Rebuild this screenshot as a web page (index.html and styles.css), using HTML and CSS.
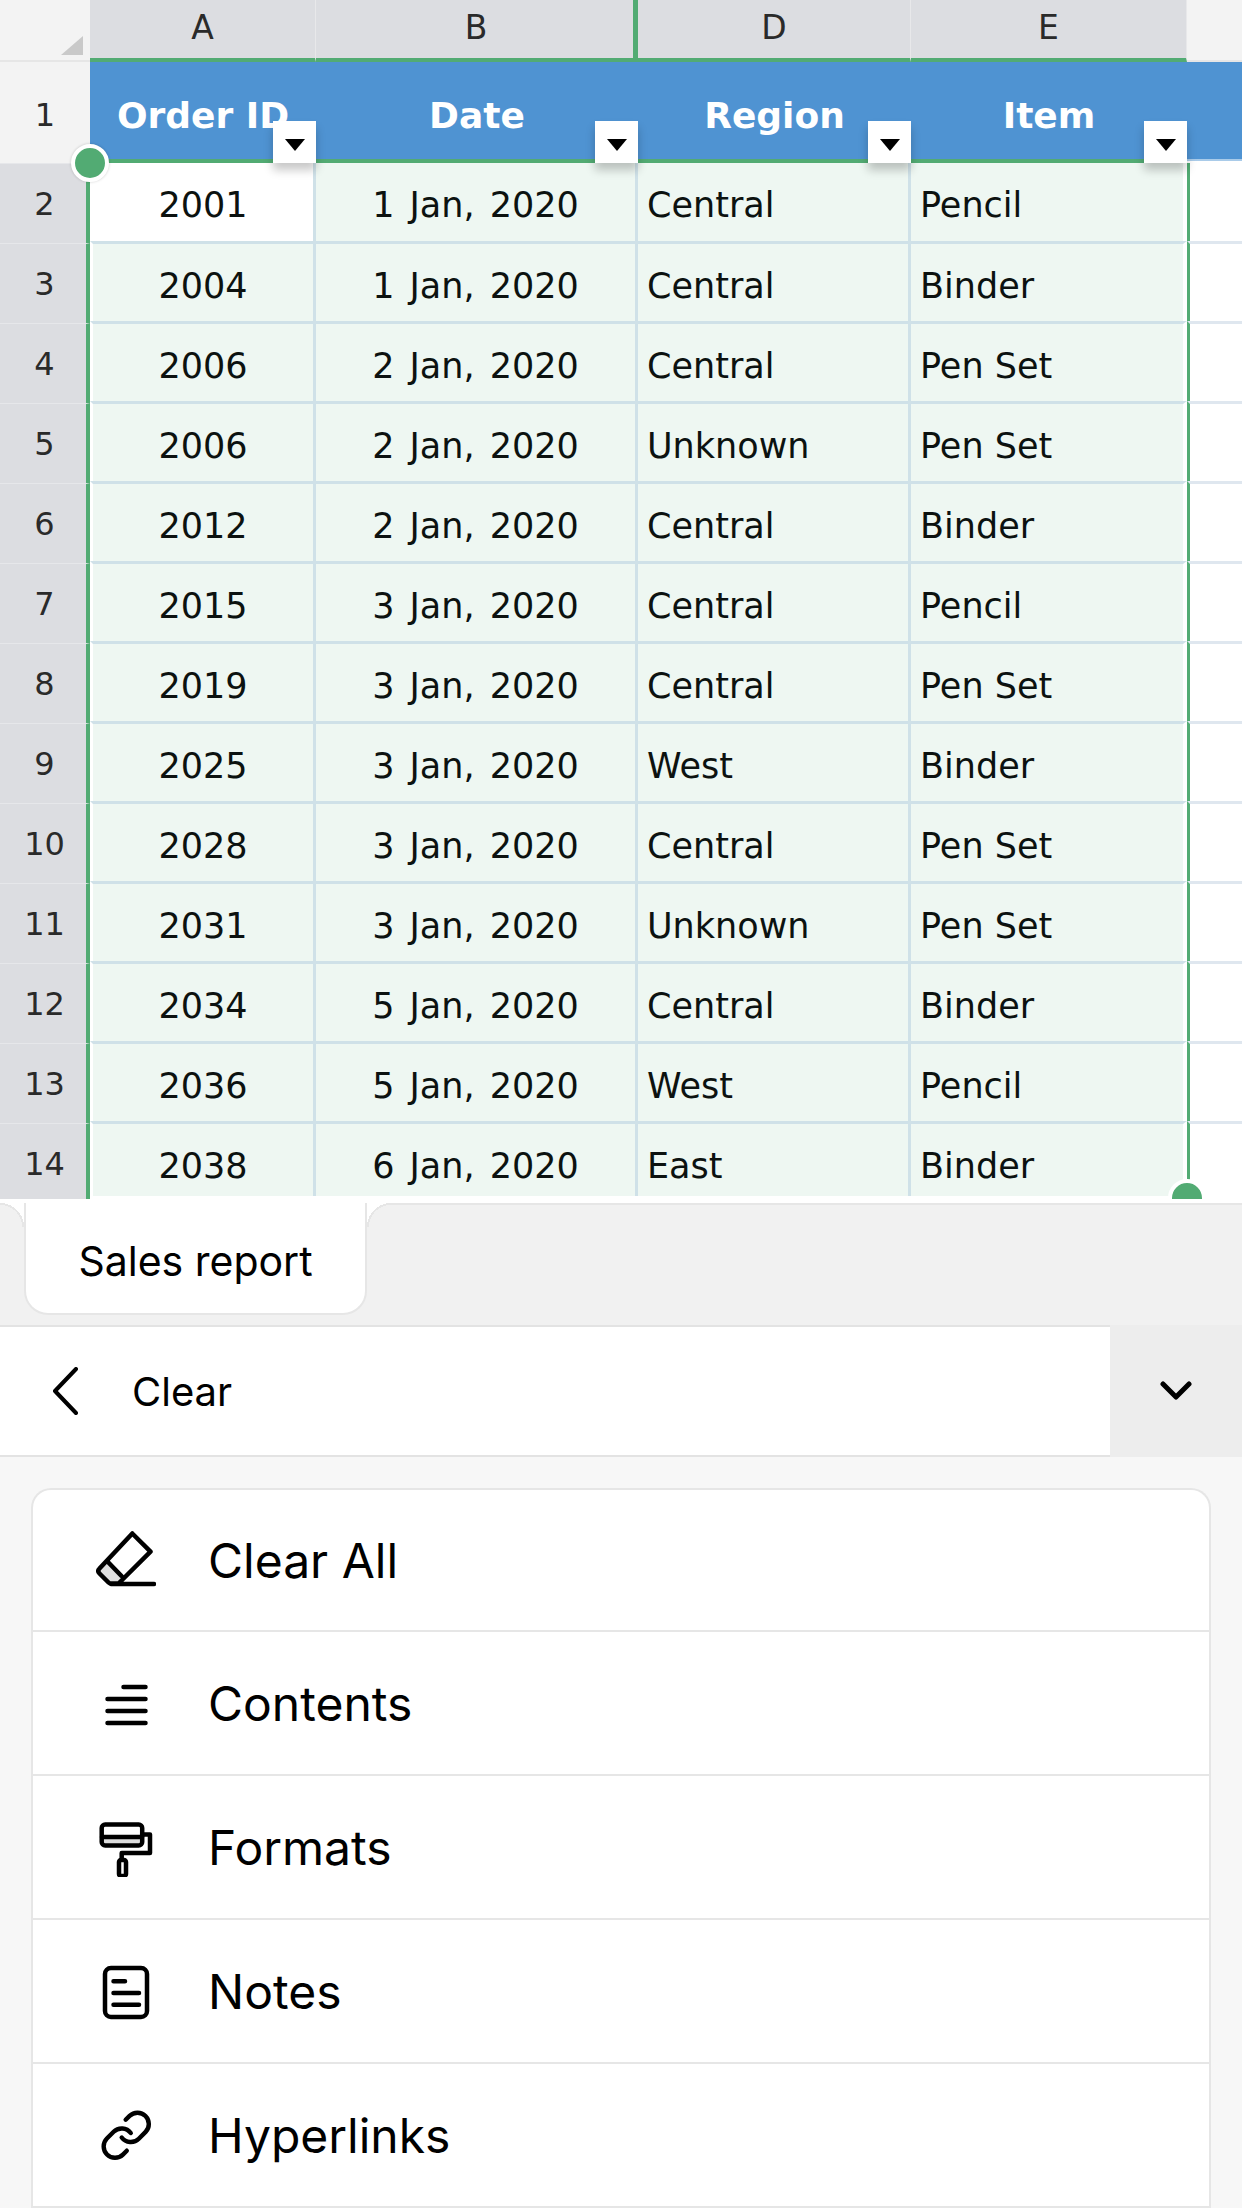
FILE: index.html
```html
<!DOCTYPE html>
<html lang="en">
<head>
<meta charset="utf-8">
<title>Sales report</title>
<link rel="stylesheet" href="styles.css">
</head>
<body>
<div class="app">
  <section class="sheet">
    <div class="row colhead">
      <div class="corner"><span class="corner-mark"></span></div>
      <div class="ch">A</div>
      <div class="ch ch-b">B</div>
      <div class="ch">D</div>
      <div class="ch">E</div>
      <div class="ch-rest"></div>
    </div>
    <div class="row titles">
      <div class="num num-top">1</div>
      <div class="th">Order ID<button class="filter"></button></div>
      <div class="th">Date<button class="filter"></button></div>
      <div class="th">Region<button class="filter"></button></div>
      <div class="th">Item<button class="filter"></button></div>
      <div class="th-rest"></div>
    </div>
    <div class="row row-first"><div class="num">2</div><div class="td ctr first active">2001</div><div class="td ctr">1 Jan, 2020</div><div class="td">Central</div><div class="td last">Pencil</div><div class="rest"></div></div>
    <div class="row"><div class="num">3</div><div class="td ctr first">2004</div><div class="td ctr">1 Jan, 2020</div><div class="td">Central</div><div class="td last">Binder</div><div class="rest"></div></div>
    <div class="row"><div class="num">4</div><div class="td ctr first">2006</div><div class="td ctr">2 Jan, 2020</div><div class="td">Central</div><div class="td last">Pen Set</div><div class="rest"></div></div>
    <div class="row"><div class="num">5</div><div class="td ctr first">2006</div><div class="td ctr">2 Jan, 2020</div><div class="td">Unknown</div><div class="td last">Pen Set</div><div class="rest"></div></div>
    <div class="row"><div class="num">6</div><div class="td ctr first">2012</div><div class="td ctr">2 Jan, 2020</div><div class="td">Central</div><div class="td last">Binder</div><div class="rest"></div></div>
    <div class="row"><div class="num">7</div><div class="td ctr first">2015</div><div class="td ctr">3 Jan, 2020</div><div class="td">Central</div><div class="td last">Pencil</div><div class="rest"></div></div>
    <div class="row"><div class="num">8</div><div class="td ctr first">2019</div><div class="td ctr">3 Jan, 2020</div><div class="td">Central</div><div class="td last">Pen Set</div><div class="rest"></div></div>
    <div class="row"><div class="num">9</div><div class="td ctr first">2025</div><div class="td ctr">3 Jan, 2020</div><div class="td">West</div><div class="td last">Binder</div><div class="rest"></div></div>
    <div class="row"><div class="num">10</div><div class="td ctr first">2028</div><div class="td ctr">3 Jan, 2020</div><div class="td">Central</div><div class="td last">Pen Set</div><div class="rest"></div></div>
    <div class="row"><div class="num">11</div><div class="td ctr first">2031</div><div class="td ctr">3 Jan, 2020</div><div class="td">Unknown</div><div class="td last">Pen Set</div><div class="rest"></div></div>
    <div class="row"><div class="num">12</div><div class="td ctr first">2034</div><div class="td ctr">5 Jan, 2020</div><div class="td">Central</div><div class="td last">Binder</div><div class="rest"></div></div>
    <div class="row"><div class="num">13</div><div class="td ctr first">2036</div><div class="td ctr">5 Jan, 2020</div><div class="td">West</div><div class="td last">Pencil</div><div class="rest"></div></div>
    <div class="row row-end"><div class="num">14</div><div class="td ctr first">2038</div><div class="td ctr">6 Jan, 2020</div><div class="td">East</div><div class="td last">Binder</div><div class="rest"></div></div>
    <span class="handle handle-start"></span>
    <span class="handle handle-end"></span>
  </section>

  <nav class="tabs">
    <div class="tab">Sales report</div>
  </nav>

  <header class="bar">
    <div class="bar-main">
      <svg class="back" viewBox="0 0 26 48" aria-hidden="true"><path d="M24 2 3 24l21 22"/></svg>
      <span class="bar-title">Clear</span>
    </div>
    <div class="bar-toggle">
      <svg class="down" viewBox="0 0 32 20" aria-hidden="true"><path d="M3 3l13 13L29 3"/></svg>
    </div>
  </header>

  <main class="panel">
    <ul class="menu">
      <li class="item">
        <svg class="ico" viewBox="0 0 60 60" aria-hidden="true">
          <path class="tint" d="M11 31 25.500 46 22 53.500H15L3.500 42z"/>
          <path d="M36.300 3.500 54.500 21.700 22.500 53.500H15Q13.500 53.500 12.500 52.500L3.500 43.500Q1 41 3.500 38.500ZM11 31 25.500 46M15 54H58"/>
        </svg>
        <span>Clear All</span>
      </li>
      <li class="item">
        <svg class="ico" viewBox="0 0 60 60" aria-hidden="true">
          <path d="M27.500 14H49.500M11.500 26H49.500M11.500 38H49.500M11.500 50H49.500"/>
        </svg>
        <span>Contents</span>
      </li>
      <li class="item">
        <svg class="ico" viewBox="0 0 60 60" aria-hidden="true">
          <rect class="tint" x="6" y="20" width="40" height="7" stroke="none"/>
          <rect x="5.700" y="7.500" width="40.500" height="21" rx="3.500"/>
          <path d="M6 20H46M47 17.500H54V36H25.700V42"/>
          <rect x="23" y="43" width="7" height="16" rx="2"/>
        </svg>
        <span>Formats</span>
      </li>
      <li class="item">
        <svg class="ico" viewBox="0 0 60 60" aria-hidden="true">
          <rect x="9" y="7" width="42" height="49" rx="6"/>
          <path d="M17.500 20.300H29M17.500 32H43M17.500 43.700H43"/>
        </svg>
        <span>Notes</span>
      </li>
      <li class="item">
        <svg class="ico" viewBox="0 0 60 60" aria-hidden="true">
          <g transform="translate(3 3) scale(2.27)">
            <path class="thin" d="M10 13a5 5 0 0 0 7.540.540l3-3a5 5 0 0 0-7.070-7.070l-1.720 1.710"/>
            <path class="thin" d="M14 11a5 5 0 0 0-7.540-.540l-3 3a5 5 0 0 0 7.070 7.070l1.710-1.710"/>
          </g>
        </svg>
        <span>Hyperlinks</span>
      </li>
    </ul>
  </main>
</div>
</body>
</html>
```

FILE: styles.css
```css
* { box-sizing: border-box; }

html, body {
  margin: 0;
  padding: 0;
  background: #fff;
}

.app {
  width: 1242px;
  height: 2208px;
  overflow: hidden;
  display: flex;
  flex-direction: column;
  font-family: Inter, "Liberation Sans", Arial, sans-serif;
  color: #000;
}

/* sheet */
.sheet {
  position: relative;
  height: 1199px;
  flex: none;
  overflow: hidden;
  font-family: "DejaVu Sans", Verdana, sans-serif;
  font-size: 35px;
  color: #0c1210;
}

.row {
  display: grid;
  grid-template-columns: 90px 226px 322px 273px 276px 55px;
  grid-template-rows: 100%;
  height: 80px;
  line-height: 84px;
}

.colhead { height: 62px; line-height: 56px; }
.titles { height: 101px; line-height: 108px; position: relative; z-index: 2; }
.row-end { height: 76px; }
.row-end .td, .row-end .rest { margin-bottom: 3px; }
.row-first .td { border-top: 0; margin-top: 0; line-height: 85px; }
.row-first .rest { border-top: 0; margin-top: 0; }

.corner {
  position: relative;
  background: #f3f3f3;
  border-bottom: 2px solid #e6e6e6;
}

.corner-mark {
  position: absolute;
  left: 61px;
  top: 36px;
  width: 22px;
  height: 19px;
  background: #c9c9c9;
  clip-path: polygon(100% 0, 100% 100%, 0 100%);
}

.ch {
  background: #dcdde1;
  border-bottom: 4px solid #52ab73;
  border-right: 1px solid #e8e8ea;
  text-align: center;
  color: #2a2a2a;
  font-size: 33px;
}

.ch-b {
  border-right: 5px solid #52ab73;
  padding-left: 3px;
}

.ch-rest {
  background: #f3f3f3;
  border-bottom: 2px solid #e6e6e6;
}

.num {
  background: #dcdde1;
  border-right: 4px solid #52ab73;
  border-top: 1px solid #e6e7ea;
  padding-left: 3px;
  text-align: center;
  color: #2a2a2a;
  font-size: 32px;
  line-height: 80px;
}

.num-top {
  background: #f3f3f3;
  border-right: 0;
  border-top: 0;
  padding-left: 0;
  line-height: 106px;
}

.th {
  position: relative;
  background: #4f93d2;
  border-bottom: 4px solid #52ab73;
  color: #fff;
  font-weight: 700;
  font-size: 36px;
  text-align: center;
  white-space: nowrap;
}

.th-rest {
  background: #4f93d2;
  height: 99px;
  border-bottom: 2px solid #a9cbe9;
}

.filter {
  position: absolute;
  right: 0;
  bottom: -4px;
  width: 43px;
  height: 42px;
  padding: 0;
  border: 0;
  background: #fff;
  box-shadow: 0 7px 9px rgba(0, 0, 0, .22);
  z-index: 3;
}

.filter::after {
  content: "";
  position: absolute;
  left: 12px;
  top: 18px;
  border-left: 10px solid transparent;
  border-right: 10px solid transparent;
  border-top: 12px solid #000;
}

.td {
  background: #eef7f2;
  border-right: 3px solid #cfe1e8;
  border-top: 3px solid #cfe1e8;
  margin-top: -2px;
  padding-left: 9px;
  white-space: nowrap;
}

.ctr { text-align: center; padding-left: 0; word-spacing: 4px; }
.first { border-left: 3px solid #fff; }
.active { background: #fff; }
.last { border-right: 4px solid #fff; }

.rest {
  background: #fff;
  border-left: 3px solid #52ab73;
  border-top: 3px solid #dfe7ef;
  margin-top: -2px;
}

.handle {
  position: absolute;
  width: 38px;
  height: 38px;
  border-radius: 50%;
  background: #52ab73;
  border: 4px solid #fff;
  box-shadow: 0 0 3px rgba(0, 0, 0, .2);
  z-index: 4;
}

.handle-start { left: 71px; top: 144px; }
.handle-end { left: 1168px; top: 1179px; box-shadow: none; }

/* tabs */
.tabs {
  margin-top: 4px;
  height: 122px;
  flex: none;
  background: #f1f1f1;
  border-top: 2px solid #e6e6e6;
  padding-left: 24px;
}

.tab {
  position: relative;
  width: 343px;
  height: 112px;
  margin-top: -2px;
  background: #fff;
  border: 2px solid #e6e6e6;
  border-top: 0;
  border-radius: 0 0 24px 24px;
  font-size: 41px;
  line-height: 116px;
  text-align: center;
}

.tab::before,
.tab::after {
  content: "";
  position: absolute;
  top: 0;
  width: 24px;
  height: 24px;
}

.tab::before {
  left: -26px;
  background: radial-gradient(circle at 0 100%, transparent 22px, #e6e6e6 22px, #e6e6e6 24px, #fff 24px);
}

.tab::after {
  right: -26px;
  background: radial-gradient(circle at 100% 100%, transparent 22px, #e6e6e6 22px, #e6e6e6 24px, #fff 24px);
}

/* bar */
.bar {
  display: flex;
  flex: none;
  height: 132px;
  background: #fff;
}

.bar-main {
  flex: 1;
  display: flex;
  align-items: center;
  padding-left: 52px;
  border-top: 2px solid #e3e3e3;
  border-bottom: 2px solid #e3e3e3;
}

.back {
  width: 26px;
  height: 48px;
  fill: none;
  stroke: #000;
  stroke-width: 4;
  stroke-linecap: round;
  stroke-linejoin: round;
  flex: none;
}

.bar-title {
  margin-left: 54px;
  font-size: 40px;
}

.bar-toggle {
  width: 132px;
  flex: none;
  background: #ededed;
  display: flex;
  align-items: center;
  justify-content: center;
}

.down {
  width: 32px;
  height: 20px;
  fill: none;
  stroke: #000;
  stroke-width: 5;
  stroke-linecap: round;
  stroke-linejoin: round;
}

/* menu */
.panel {
  flex: 1;
  background: #f7f7f7;
  padding: 31px 31px 0;
}

.menu {
  list-style: none;
  margin: 0;
  padding: 0;
  background: #fff;
  border: 2px solid #e6e6e6;
  border-bottom: 0;
  border-radius: 20px 20px 0 0;
}

.item {
  display: flex;
  align-items: center;
  height: 144px;
  padding-left: 63px;
  gap: 52px;
  border-bottom: 2px solid #e6e6e6;
  font-size: 48px;
}

.item:first-child { height: 142px; }

.ico {
  width: 60px;
  height: 60px;
  flex: none;
  fill: none;
  stroke: #000;
  stroke-width: 4.500;
  stroke-linecap: round;
  stroke-linejoin: round;
}

.ico .tint { fill: #dedede; stroke: none; }
.ico .thin { stroke-width: 1.950; }
```
